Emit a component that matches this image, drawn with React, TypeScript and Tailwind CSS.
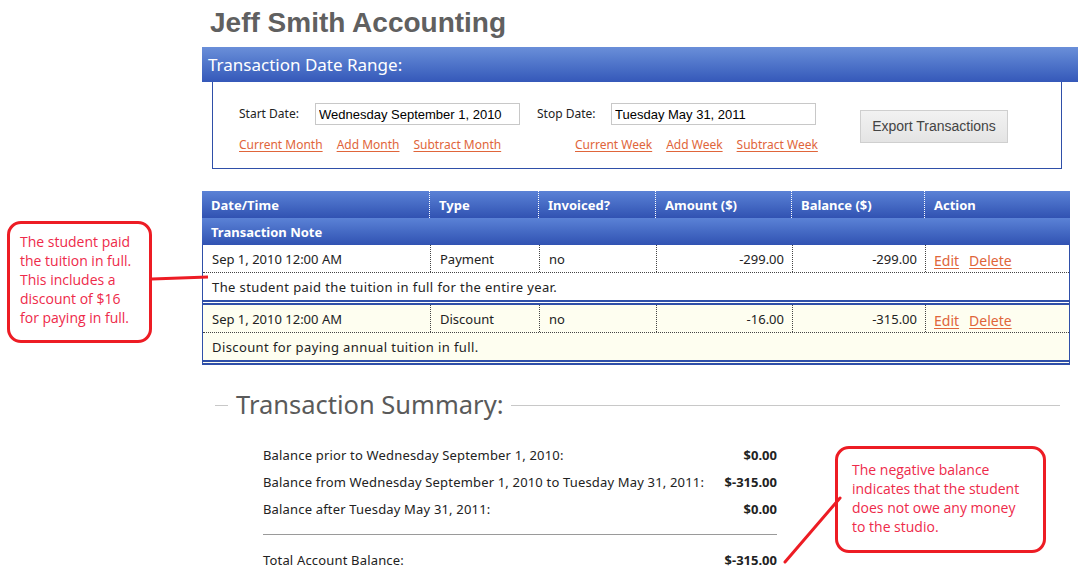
const cols = "grid grid-cols-[228px_109px_117px_136px_133px_145px]";

const rows = [
  {
    date: "Sep 1, 2010 12:00 AM",
    type: "Payment",
    invoiced: "no",
    amount: "-299.00",
    balance: "-299.00",
    note: "The student paid the tuition in full for the entire year.",
    bg: "bg-white",
  },
  {
    date: "Sep 1, 2010 12:00 AM",
    type: "Discount",
    invoiced: "no",
    amount: "-16.00",
    balance: "-315.00",
    note: "Discount for paying annual tuition in full.",
    bg: "bg-[#fefef0]",
  },
];

function OrangeLink({ children }: { children: React.ReactNode }) {
  return <a className="text-[#e0653a] underline underline-offset-2 cursor-pointer">{children}</a>;
}

function DateRange() {
  return (
    <div className="ml-[10px] w-[850px] h-[87px] border-x border-b border-[#2f4fa8] flex text-[12px] text-[#222]">
      <div className="pl-[26px] pt-[21px]">
        <div className="flex items-center h-[22px]">
          <span className="w-[76px]">Start Date:</span>
          <input
            readOnly
            value="Wednesday September 1, 2010"
            className="w-[205px] h-[22px] border border-[#c8c8c8] px-[3px] font-['Liberation_Sans'] text-[13px] text-black outline-none"
          />
          <span className="w-[74px] ml-[17px]">Stop Date:</span>
          <input
            readOnly
            value="Tuesday May 31, 2011"
            className="w-[205px] h-[22px] border border-[#c8c8c8] px-[3px] font-['Liberation_Sans'] text-[13px] text-black outline-none"
          />
        </div>
        <div className="flex mt-[12px] h-[16px] items-center">
          <div className="w-[336px] flex gap-[14px]">
            <OrangeLink>Current Month</OrangeLink>
            <OrangeLink>Add Month</OrangeLink>
            <OrangeLink>Subtract Month</OrangeLink>
          </div>
          <div className="flex gap-[14px]">
            <OrangeLink>Current Week</OrangeLink>
            <OrangeLink>Add Week</OrangeLink>
            <OrangeLink>Subtract Week</OrangeLink>
          </div>
        </div>
      </div>
      <div className="ml-auto mr-[53px] pt-[28px]">
        <button className="w-[148px] h-[33px] border border-[#cfcfcf] bg-gradient-to-b from-[#f2f2f2] to-[#e4e4e4] font-['Liberation_Sans'] text-[14px] text-[#444]">
          Export Transactions
        </button>
      </div>
    </div>
  );
}

function TransactionTable() {
  const head = "h-[27px] flex items-center pl-[9px] pt-[3px] border-r border-dotted border-white";
  const cell = "h-[27px] flex items-center pl-[9px] pt-[3px] border-r border-dotted border-[#444]";
  const num = "h-[27px] flex items-center justify-end pr-[8px] pt-[3px] border-r border-dotted border-[#444]";
  return (
    <div className="mt-[22px] w-[868px] text-[13px] text-[#222]">
      <div className={`${cols} bg-gradient-to-b from-[#5b82d6] to-[#3152b2] text-white font-bold`}>
        <div className={head}>Date/Time</div>
        <div className={head}>Type</div>
        <div className={head}>Invoiced?</div>
        <div className={head}>Amount ($)</div>
        <div className={head}>Balance ($)</div>
        <div className="h-[27px] flex items-center pl-[9px] pt-[3px]">Action</div>
      </div>
      <div className="h-[27px] flex items-center pl-[9px] pt-[3px] bg-gradient-to-b from-[#5b82d6] to-[#3152b2] text-white font-bold">
        Transaction Note
      </div>
      {rows.map((r, i) => (
        <div key={i} className={`${r.bg} border-x border-[#2f4fa8] border-b-[5px] border-b-[#2f4fa8] [border-bottom-style:double]`}>
          <div className={`${cols} border-b border-dotted border-[#444]`}>
            <div className={cell}>{r.date}</div>
            <div className={cell}>{r.type}</div>
            <div className={cell}>{r.invoiced}</div>
            <div className={num}>{r.amount}</div>
            <div className={num}>{r.balance}</div>
            <div className="h-[27px] flex items-center pl-[8px] pt-[3px] gap-[10px] text-[14px]">
              <OrangeLink>Edit</OrangeLink>
              <OrangeLink>Delete</OrangeLink>
            </div>
          </div>
          <div className="h-[27px] flex items-center pl-[9px] pt-[2px] tracking-[0.4px]">{r.note}</div>
        </div>
      ))}
    </div>
  );
}

function Summary() {
  const items = [
    ["Balance prior to Wednesday September 1, 2010:", "$0.00"],
    ["Balance from Wednesday September 1, 2010 to Tuesday May 31, 2011:", "$-315.00"],
    ["Balance after Tuesday May 31, 2011:", "$0.00"],
  ];
  return (
    <div className="mt-[22px]">
      <div className="flex items-center h-[36px] mr-[18px]">
        <div className="ml-[13px] w-[13px] h-px bg-[#c8c8c8]" />
        <h2 className="px-[8px] text-[25.5px] text-[#5a5a5a] leading-none">Transaction Summary:</h2>
        <div className="flex-1 h-px bg-[#c8c8c8]" />
      </div>
      <div className="ml-[61px] w-[514px] mt-[19px] text-[13px] text-[#222]">
        {items.map(([label, value]) => (
          <div key={label} className="h-[27px] flex items-center justify-between">
            <span className="tracking-[0.17px]">{label}</span>
            <span className="font-bold">{value}</span>
          </div>
        ))}
        <div className="h-px bg-[#9a9a9a] mt-[11px]" />
        <div className="h-[27px] mt-[12px] flex items-center justify-between">
          <span className="tracking-[0.17px]">Total Account Balance:</span>
          <span className="font-bold">$-315.00</span>
        </div>
      </div>
    </div>
  );
}

export default function App() {
  return (
    <div className="relative w-[1089px] h-[588px] bg-white overflow-hidden font-['Noto_Sans',sans-serif]">
      <div className="ml-[202px] w-[876px]">
        <h1 className="h-[47px] pl-[8px] pt-[6px] font-['Liberation_Sans',sans-serif] text-[28px] font-bold text-[#606060] leading-[34px]">
          Jeff Smith Accounting
        </h1>
        <div className="h-[35px] flex items-center px-[6px] bg-gradient-to-b from-[#6a8fd9] to-[#3558b9] text-white text-[17px]">
          Transaction Date Range:
        </div>
        <DateRange />
        <TransactionTable />
        <Summary />
      </div>

      {/* callouts */}
      <div className="absolute left-[7px] top-[221px] w-[145px] h-[122px] border-[3px] border-[#ed1c24] rounded-[14px] pl-[10px] pt-[8px] font-['Open_Sans',sans-serif] text-[14px] leading-[19px] text-[#ee2a4a] bg-white">
        The student paid<br />the tuition in full.<br />This includes a<br />discount of $16<br />for paying in full.
      </div>
      <div className="absolute left-[835px] top-[446px] w-[211px] h-[107px] border-[3px] border-[#ed1c24] rounded-[14px] pl-[14px] pt-[11px] font-['Open_Sans',sans-serif] text-[14px] leading-[19px] text-[#ee2a4a] bg-white">
        The negative balance<br />indicates that the student<br />does not owe any money<br />to the studio.
      </div>
      <svg className="absolute left-0 top-0 pointer-events-none" width="1089" height="588">
        <line x1="152" y1="279" x2="208" y2="277" stroke="#ed1c24" strokeWidth="3" />
        <line x1="785" y1="562" x2="840" y2="498" stroke="#ed1c24" strokeWidth="3" strokeLinecap="round" />
      </svg>
    </div>
  );
}
